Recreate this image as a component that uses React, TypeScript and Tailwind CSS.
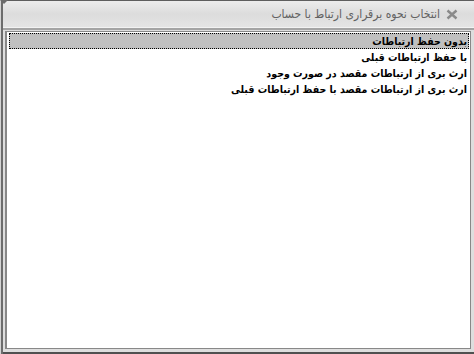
import { useState } from 'react'

const options = [
  'بدون حفظ ارتباطات',
  'با حفظ ارتباطات قبلی',
  'ارث بری از ارتباطات مقصد در صورت وجود',
  'ارث بری از ارتباطات مقصد با حفظ ارتباطات قبلی',
]

export default function App() {
  const [selected, setSelected] = useState(0)

  return (
    <div className="relative flex h-[354px] w-[474px] bg-[#dedede] font-['DejaVu_Sans_Condensed','DejaVu_Sans',sans-serif]">
      <div className="w-px bg-[#d4d4d4]" />
      <div className="w-[2px] bg-[#6c6c6c]" />
      <div className="flex flex-1 flex-col border-t border-[#5e5e5e] border-b-2 border-b-[#505050]">
        {/* title bar */}
        <div
          dir="rtl"
          className="flex h-[26px] items-center gap-[6px] bg-gradient-to-b from-[#ececec] via-[#dcdcdc] to-[#e4e4e4] pr-[16px]"
        >
          <svg width="12" height="11" viewBox="0 0 12 11" className="shrink-0">
            <path d="M1.5 1.5 L10.5 9.5 M10.5 1.5 L1.5 9.5" stroke="#8a8a8a" strokeWidth="2.4" />
          </svg>
          <span className="text-[12px] leading-none text-[#626262]">
            انتخاب نحوه برقراری ارتباط با حساب
          </span>
        </div>
        <div className="h-px bg-[#f2f2f2]" />
        <div className="h-[2px] bg-[#a4a4a4]" />

        {/* body */}
        <div className="flex flex-1 pb-[3px] pl-[2px] pr-[3px] pt-px">
          <div className="flex flex-1 flex-col border-b border-l-2 border-r border-t border-[#888888] bg-white pl-[2px] pr-[1px] pt-[1px]">
            {options.map((opt, i) => (
              <div
                key={opt}
                dir="rtl"
                onClick={() => setSelected(i)}
                className={
                  i === selected
                    ? 'h-[16px] border border-dotted border-black bg-[#c0c0c0] pr-[1px] text-[10.5px] font-bold leading-[15px] text-black'
                    : 'h-[16px] border border-transparent pr-[1px] text-[10.5px] font-bold leading-[15px] text-black'
                }
              >
                {opt}
              </div>
            ))}
          </div>
        </div>
      </div>
      <div className="absolute left-0 top-0 h-0 w-0 border-l-[4px] border-r-[4px] border-t-[4px] border-l-transparent border-r-transparent border-t-[#6c6c6c]" />
    </div>
  )
}
